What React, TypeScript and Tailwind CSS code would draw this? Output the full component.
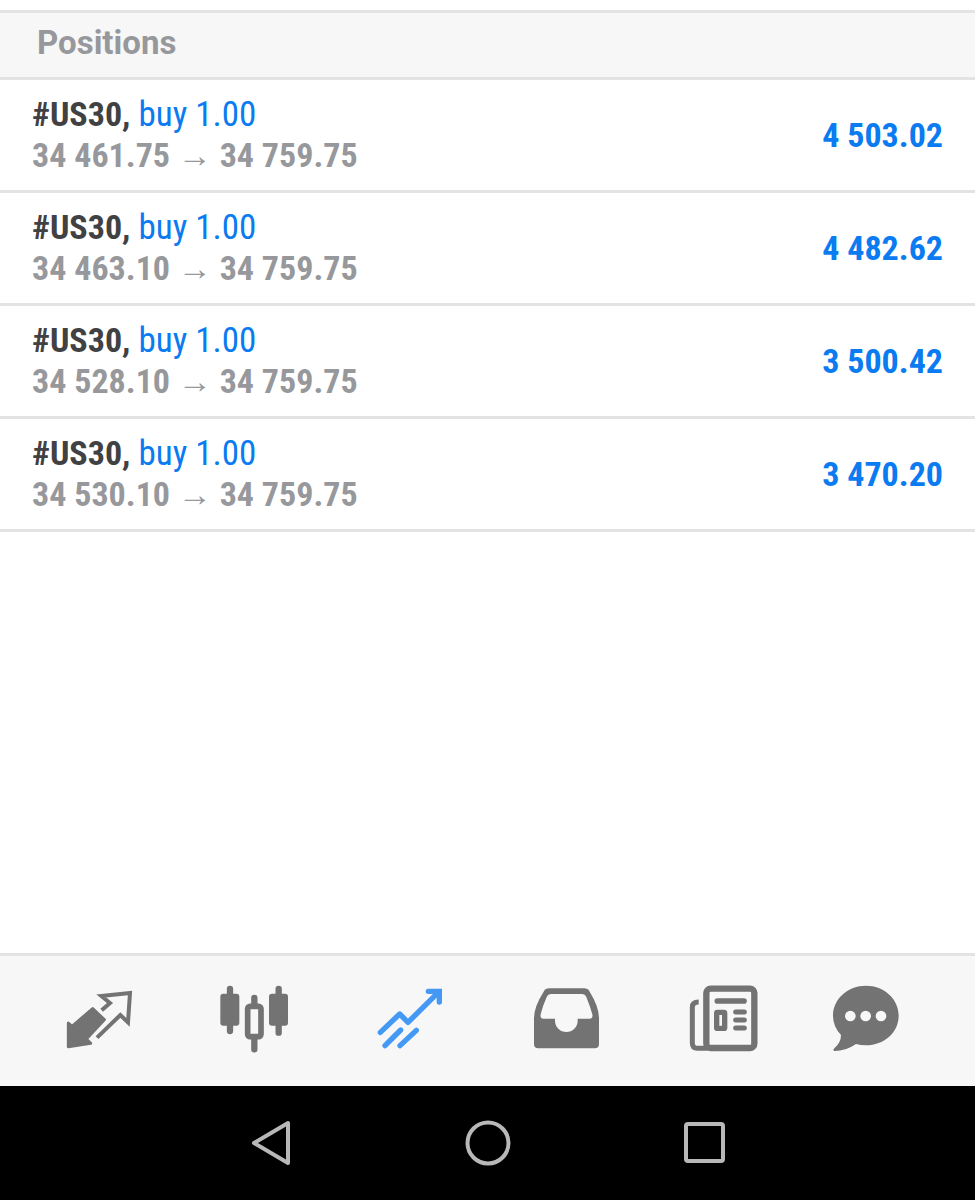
import type { ReactNode } from "react";

const positions = [
  { symbol: "#US30", side: "buy 1.00", open: "34 461.75", current: "34 759.75", profit: "4 503.02" },
  { symbol: "#US30", side: "buy 1.00", open: "34 463.10", current: "34 759.75", profit: "4 482.62" },
  { symbol: "#US30", side: "buy 1.00", open: "34 528.10", current: "34 759.75", profit: "3 500.42" },
  { symbol: "#US30", side: "buy 1.00", open: "34 530.10", current: "34 759.75", profit: "3 470.20" },
];

function TabIcon({ viewBox, children }: { viewBox: string; children: ReactNode }) {
  return (
    <svg viewBox={viewBox} className="size-[72px]" fill="none" strokeLinecap="round" strokeLinejoin="round" aria-hidden="true">
      {children}
    </svg>
  );
}

const tabs = [
  {
    label: "Quotes",
    icon: (
      <TabIcon viewBox="69 45 216 216">
        <path
          d="M85 159 L96 169 L158 116 L193 149 L139 207 L152 220 L85 230 Z"
          fill="currentColor"
          stroke="currentColor"
          strokeWidth="9"
        />
        <path
          d="M185 121 L210 99 L184 78 L270 69 L264 157 L241 135 L171 203"
          stroke="currentColor"
          strokeWidth="12"
          strokeLinecap="butt"
          strokeLinejoin="miter"
        />
      </TabIcon>
    ),
  },
  {
    label: "Charts",
    icon: (
      <TabIcon viewBox="57 45 216 216">
        <path d="M90 57 V183 M236 57 V188 M163 84 V105 M163 205 V238" stroke="currentColor" strokeWidth="19" />
        <rect x="61" y="71" width="57" height="96" rx="9" fill="currentColor" />
        <rect x="207" y="71" width="57" height="96" rx="9" fill="currentColor" />
        <rect x="143" y="109" width="40" height="91" rx="7" stroke="currentColor" strokeWidth="17" />
      </TabIcon>
    ),
  },
  {
    label: "Trade",
    active: true,
    icon: (
      <TabIcon viewBox="45 45 216 216">
        <path d="M61 187 L119 132 L144 157 L234 68" stroke="currentColor" strokeWidth="16" />
        <path d="M205 64 H238 V96" stroke="currentColor" strokeWidth="16" strokeLinejoin="miter" />
        <path d="M75 227 L122 180 M120 227 L169 181" stroke="currentColor" strokeWidth="16" />
      </TabIcon>
    ),
  },
  {
    label: "History",
    icon: (
      <TabIcon viewBox="63 45 216 216">
        <path
          fillRule="evenodd"
          fill="currentColor"
          d="M118 55 H222 Q234 55 239 65 Q267 110 267 145 V222 Q267 235 254 235 H85 Q72 235 72 222 V145 Q72 110 101 65 Q106 55 118 55 Z M124 72 Q114 72 110 81 Q98 108 92 133 Q90 146 100 146 H135 V152 A34 34 0 0 0 203 152 V146 H239 Q249 146 247 133 Q240 108 229 81 Q225 72 215 72 Z"
        />
      </TabIcon>
    ),
  },
  {
    label: "News",
    icon: (
      <TabIcon viewBox="51 45 216 216">
        <rect x="109" y="56" width="144" height="178" rx="13" stroke="currentColor" strokeWidth="19" />
        <path d="M86 96 Q67 96 67 111 V219 Q67 235 82 235 H112" stroke="currentColor" strokeWidth="15" strokeLinecap="butt" />
        <path d="M142 93 H222" stroke="currentColor" strokeWidth="17" />
        <path d="M197 126 H223 M197 150 H223 M197 174 H223" stroke="currentColor" strokeWidth="15" />
        <rect x="140" y="127" width="24" height="48" rx="2" stroke="currentColor" strokeWidth="16" />
      </TabIcon>
    ),
  },
  {
    label: "Messages",
    icon: (
      <TabIcon viewBox="60 45 216 216">
        <path
          fill="currentColor"
          d="M168 47 C222 47 266 86 266 137 C266 188 222 226 168 226 Q152 226 138 222 Q108 243 73 243 Q67 241 73 235 Q93 218 93 195 Q69 170 69 137 C69 86 114 47 168 47 Z"
        />
        <circle cx="121" cy="138" r="16" fill="#f7f7f7" />
        <circle cx="167" cy="138" r="16" fill="#f7f7f7" />
        <circle cx="213" cy="138" r="16" fill="#f7f7f7" />
      </TabIcon>
    ),
  },
];

const systemButtons = [
  { label: "Back", shape: <path d="M6 24 L40 4 V44 Z" /> },
  { label: "Home", shape: <circle cx="24" cy="24" r="20.5" /> },
  { label: "Recent apps", shape: <rect x="5" y="5" width="37" height="37" rx="2" /> },
];

export default function App() {
  return (
    <div className="flex min-h-screen flex-col bg-white font-['Roboto_Condensed',Roboto,sans-serif]">
      <main className="flex-1 pt-[10px]">
        <h1 className="border-y-[3px] border-[#e3e3e3] bg-[#f7f7f7] px-[37px] pt-[10px] pb-[14px] font-[Roboto,sans-serif] text-[33px] leading-[40px] font-bold text-[#97989c]">
          Positions
        </h1>

        <ul>
          {positions.map((p) => (
            <li
              key={p.open}
              className="flex items-center justify-between border-b-[3px] border-[#e3e3e3] px-8 py-[15px] text-[34px] leading-[40px]"
            >
              <div>
                <p className="text-[35px] leading-[40px] text-[#0a7bf0]">
                  <span className="text-[34px] leading-none font-bold text-[#414143]">{p.symbol},</span> {p.side}
                </p>
                <p className="font-bold text-[#97989c]">
                  {p.open} → {p.current}
                </p>
              </div>
              <p className="font-bold text-[#0a7bf0]">{p.profit}</p>
            </li>
          ))}
        </ul>
      </main>

      {/* App tabs */}
      <nav className="grid grid-cols-[repeat(5,6fr)_5fr] border-t-[3px] border-[#e3e3e3] bg-[#f7f7f7] pr-[44px] pl-[21px]">
        {tabs.map((tab) => (
          <button
            key={tab.label}
            type="button"
            aria-label={tab.label}
            className={`flex h-[130px] items-center justify-center ${tab.active ? "text-[#4499f5]" : "text-[#737373]"}`}
          >
            {tab.icon}
          </button>
        ))}
      </nav>

      {/* System bar */}
      <div className="bg-black">
        <div className="mx-auto grid h-[114px] w-2/3 grid-cols-3">
          {systemButtons.map((b) => (
            <button key={b.label} type="button" aria-label={b.label} className="flex items-center justify-center">
              <svg
                viewBox="-1 0 48 48"
                className="size-[48px]"
                fill="none"
                stroke="#b8b8b8"
                strokeWidth="4"
                strokeLinejoin="round"
                aria-hidden="true"
              >
                {b.shape}
              </svg>
            </button>
          ))}
        </div>
      </div>
    </div>
  );
}
